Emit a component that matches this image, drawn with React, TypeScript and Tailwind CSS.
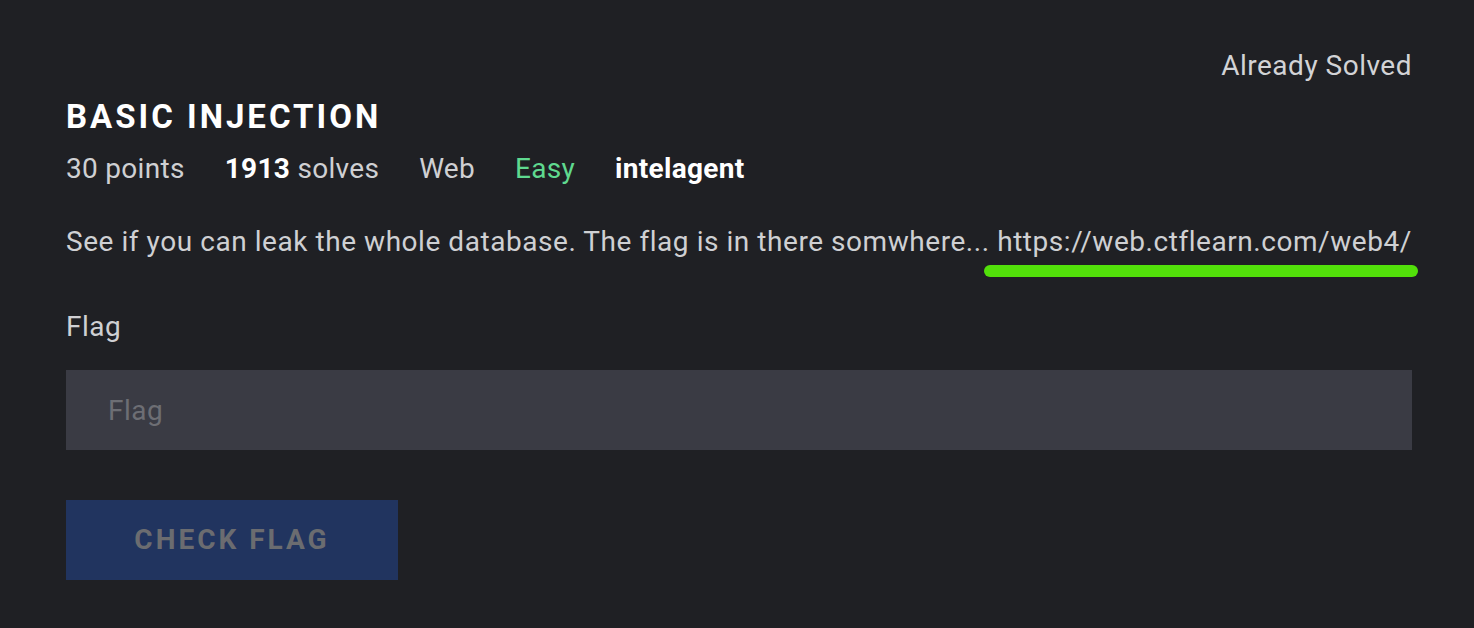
import React from 'react';

const App = () => {
  return (
    <div className="min-h-screen bg-[#1f2024] font-['Roboto',sans-serif] text-[#cfd0d3]">
      <div className="pl-[66px] pr-[62px] pt-[48px] pb-[48px]">
        {/* Status */}
        <div className="text-right text-[28px] leading-[36px] tracking-[0.5px] text-[#d2d3d6]">Already Solved</div>

        {/* Title */}
        <h1 className="mt-[11px] text-[33px] leading-[44px] font-bold tracking-[3px] text-white">BASIC INJECTION</h1>

        {/* Meta */}
        <div className="mt-[12px] flex items-center gap-[40px] text-[28px] leading-[36px] tracking-[0.3px]">
          <span>30 points</span>
          <span>
            <span className="font-bold text-white">1913</span> solves
          </span>
          <span>Web</span>
          <span className="text-[#5fd98f]">Easy</span>
          <span className="font-bold text-white">intelagent</span>
        </div>

        {/* Description */}
        <p className="mt-[37px] text-[28px] leading-[36px] tracking-[0.55px]">
          See if you can leak the whole database. The flag is in there somwhere...{' '}
          <span className="relative">
            https://web.ctflearn.com/web4/
            <span className="absolute left-[-13px] right-[-6px] top-[40px] h-[12px] rounded-full bg-[#52e00a]" />
          </span>
        </p>

        {/* Flag form */}
        <label className="mt-[49px] block text-[28px] leading-[36px] tracking-[0.5px]">Flag</label>
        <input
          className="mt-[25px] block h-[80px] w-full bg-[#3a3b44] px-[42px] text-[28px] tracking-[0.5px] text-white outline-none placeholder:text-[#6d6e74]"
          placeholder="Flag"
        />
        <button className="mt-[50px] h-[80px] w-[332px] bg-[#21345f] text-[28px] font-bold tracking-[3px] text-[#6b6c70]">
          CHECK FLAG
        </button>
      </div>
    </div>
  );
};

export default App;
